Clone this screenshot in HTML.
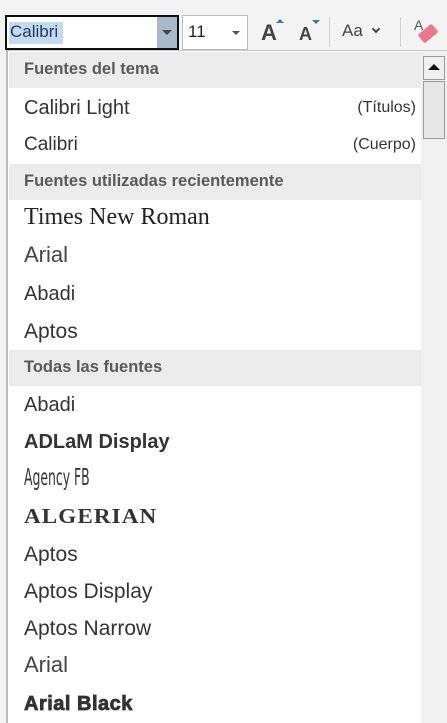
<!DOCTYPE html>
<html><head><meta charset="utf-8"><style>
*{margin:0;padding:0;box-sizing:border-box}
body{width:447px;height:723px;overflow:hidden;background:#f3f3f3;font-family:"Liberation Sans",sans-serif;position:relative;color:#333}
.a{position:absolute;white-space:nowrap}
.hdr{position:absolute;left:9px;width:412px;height:36px;background:#ebebeb;font-weight:bold;color:#595959;font-size:16.5px;padding:8px 0 0 15px}
.it{position:absolute;left:24px;font-size:20px;color:#333;white-space:nowrap}
</style></head><body>
<!-- toolbar -->
<div class="a" style="left:5px;top:15px;width:174px;height:35px;border:2px solid #111;background:#fff"></div>
<div class="a" style="left:9px;top:22px;height:22px;width:54px;background:#c5d9f1"></div>
<div class="a" style="left:10px;top:22px;font-size:17px;color:#1f3a63">Calibri</div>
<div class="a" style="left:157px;top:17px;width:20px;height:31px;background:#a9b9cc"></div>
<div class="a" style="left:162px;top:30px;width:0;height:0;border-left:5px solid transparent;border-right:5px solid transparent;border-top:5px solid #444"></div>
<div class="a" style="left:182px;top:15px;width:66px;height:35px;border:1px solid #bcbcbc;background:#fff"></div>
<div class="a" style="left:188px;top:22px;font-size:17px;color:#222">11</div>
<div class="a" style="left:232px;top:31px;width:0;height:0;border-left:4px solid transparent;border-right:4px solid transparent;border-top:4px solid #555"></div>
<div class="a" style="left:261px;top:20px;font-size:22px;color:#444;font-weight:bold">A</div>
<div class="a" style="left:276px;top:19px;width:0;height:0;border-left:4px solid transparent;border-right:4px solid transparent;border-bottom:4px solid #2b79c2"></div>
<div class="a" style="left:299px;top:24px;font-size:18px;color:#444;font-weight:bold">A</div>
<div class="a" style="left:312px;top:20px;width:0;height:0;border-left:4px solid transparent;border-right:4px solid transparent;border-top:4px solid #2b79c2"></div>
<div class="a" style="left:329px;top:17px;width:1px;height:30px;background:#d0d0d0"></div>
<div class="a" style="left:342px;top:21px;font-size:17px;color:#444">Aa</div>
<div class="a" style="left:373px;top:26px;width:6px;height:6px;border-right:2px solid #444;border-bottom:2px solid #444;transform:rotate(45deg)"></div>
<div class="a" style="left:400px;top:17px;width:1px;height:30px;background:#d0d0d0"></div>
<div class="a" style="left:414px;top:17px;font-size:14px;color:#555">A</div>
<div class="a" style="left:419px;top:28px;width:18px;height:11px;background:#e8788a;border-radius:2px;transform:rotate(-40deg)"></div>
<!-- panel -->
<div class="a" style="left:6px;top:50px;width:441px;height:673px;background:#fff;border-left:2px solid #bdbdbd;border-top:1px solid #c8c8c8"></div>
<div class="a" style="left:421px;top:51px;width:26px;height:672px;background:#f0f0f0"></div>
<div class="a" style="left:423px;top:56px;width:22px;height:24px;border:1px solid #9a9a9a;background:#f0f0f0"></div>
<div class="a" style="left:428px;top:64px;width:0;height:0;border-left:6px solid transparent;border-right:6px solid transparent;border-bottom:6px solid #111"></div>
<div class="a" style="left:423px;top:81px;width:22px;height:58px;border:1px solid #9a9a9a;background:#e6e6e6"></div>

<div class="hdr" style="top:52px">Fuentes del tema</div>
<div class="it" style="top:97px">Calibri Light</div>
<div class="a" style="right:31px;top:99px;font-size:16px;color:#333">(Títulos)</div>
<div class="it" style="top:134px;font-size:19px">Calibri</div>
<div class="a" style="right:31px;top:136px;font-size:16px;color:#333">(Cuerpo)</div>
<div class="hdr" style="top:164px">Fuentes utilizadas recientemente</div>
<div class="it" style="top:204px;font-family:'Liberation Serif',serif;font-size:24px;color:#222">Times New Roman</div>
<div class="it" style="top:242px;font-size:22px;font-weight:300;color:#444">Arial</div>
<div class="it" style="top:283px">Abadi</div>
<div class="it" style="top:320px;font-size:21px">Aptos</div>
<div class="hdr" style="top:350px">Todas las fuentes</div>
<div class="it" style="top:394px">Abadi</div>
<div class="it" style="top:431px;font-weight:bold;font-size:20px">ADLaM Display</div>
<div class="it" style="top:465px;font-family:'DejaVu Sans Condensed','DejaVu Sans',sans-serif;font-size:23px;transform:scaleX(0.6);transform-origin:left">Agency FB</div>
<div class="it" style="top:504px;font-family:'Liberation Serif',serif;font-weight:bold;font-size:21px;letter-spacing:1px;transform:scaleX(1.1);transform-origin:left">ALGERIAN</div>
<div class="it" style="top:543px;font-size:21px">Aptos</div>
<div class="it" style="top:580px;font-size:21px">Aptos Display</div>
<div class="it" style="top:617px;font-size:21px">Aptos Narrow</div>
<div class="it" style="top:652px;font-size:22px;color:#444">Arial</div>
<div class="it" style="top:693px;font-weight:bold;font-size:20px;-webkit-text-stroke:0.8px #333;letter-spacing:0.5px">Arial Black</div>
</body></html>
